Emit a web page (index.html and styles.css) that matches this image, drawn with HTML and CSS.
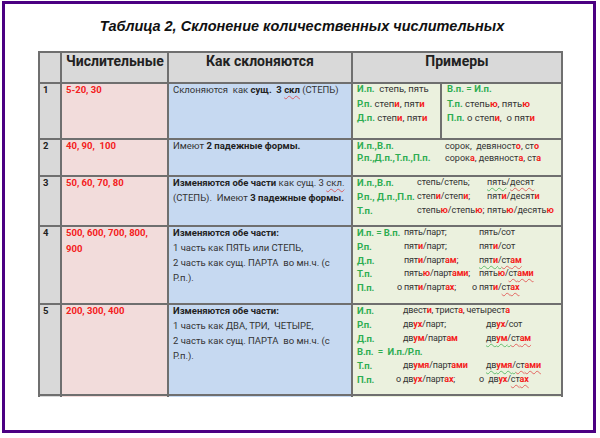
FILE: index.html
```html
<!DOCTYPE html>
<html lang="ru">
<head>
<meta charset="utf-8">
<title>Склонение количественных числительных</title>
<link rel="stylesheet" href="styles.css">
</head>
<body>
<div class="frame">
  <h1 class="title">Таблица 2, Склонение количественных числительных</h1>
  <div class="clip">
    <div class="tbl">
      <div class="c hd"></div>
      <div class="c hd">Числительные</div>
      <div class="c hd center">Как склоняются</div>
      <div class="c hd center wide">Примеры</div>

      <div class="c num"><div class="in">1</div></div>
      <div class="c red"><div class="in">5-20, 30</div></div>
      <div class="c blue"><div class="in">Склоняются&nbsp; как <b>сущ.&nbsp; 3 <span class="sp-r">скл</span></b> (СТЕПЬ)</div></div>
      <div class="c green r1">
        <div class="in">
          <div><span class="g">И.п.</span>&nbsp; степь, пять</div>
          <div><span class="g">Р.п.</span> степ<span class="r">и</span>, пят<span class="r">и</span></div>
          <div><span class="g">Д.п.</span> степ<span class="r">и</span>, пят<span class="r">и</span></div>
        </div>
      </div>
      <div class="c green r1 r1b">
        <div class="in">
          <div><span class="g">В.п. = И.п.</span></div>
          <div><span class="g">Т.п.</span> степь<span class="r">ю</span>, пять<span class="r">ю</span></div>
          <div><span class="g">П.п.</span> о степ<span class="r">и</span>,&nbsp; о пят<span class="r">и</span></div>
        </div>
      </div>

      <div class="c num"><div class="in">2</div></div>
      <div class="c red"><div class="in">40, 90,&nbsp; 100</div></div>
      <div class="c blue"><div class="in">Имеют <b>2 падежные формы.</b></div></div>
      <div class="c green wide">
        <div class="in ex ex2">
          <span class="g">И.п.,В.п.</span><span>сорок,&nbsp; девяност<span class="r">о</span>, ст<span class="r">о</span></span>
          <span class="g">Р.п.,Д.п.,Т.п.,П.п.</span><span>сорок<span class="r">а</span>, девяност<span class="r">а</span>, ст<span class="r">а</span></span>
        </div>
      </div>

      <div class="c num"><div class="in">3</div></div>
      <div class="c red"><div class="in">50, 60, 70, 80</div></div>
      <div class="c blue"><div class="in"><b>Изменяются обе части</b> как сущ. 3 <span class="sp-r">скл.</span><br>(СТЕПЬ).&nbsp; Имеют <b>3 падежные формы.</b></div></div>
      <div class="c green wide">
        <div class="in ex ex3">
          <span class="g">И.п.,В.п.</span><span>степь/степь;</span><span><span class="sp-g">пять</span>/<span class="sp-r">десят</span></span>
          <span class="g">Р.п., Д.п.,П.п.</span><span>степ<span class="r">и</span>/степ<span class="r">и</span>;</span><span>пят<span class="r">и</span>/десят<span class="r">и</span></span>
          <span class="g">Т.п.</span><span>степь<span class="r">ю</span>/степь<span class="r">ю</span>;</span><span>пять<span class="r">ю</span>/десять<span class="r">ю</span></span>
        </div>
      </div>

      <div class="c num"><div class="in">4</div></div>
      <div class="c red"><div class="in">500, 600, 700, 800,<br>900</div></div>
      <div class="c blue"><div class="in"><b>Изменяются обе части:</b><br>1 часть как ПЯТЬ или СТЕПЬ,<br>2 часть как сущ. ПАРТА&nbsp; во мн.ч. (с<br>Р.п.).</div></div>
      <div class="c green wide">
        <div class="in ex ex4">
          <span class="g">И.п. = В.п.</span><span>пять/парт;</span><span>пять/сот</span>
          <span class="g">Р.п.</span><span>пят<span class="r">и</span>/парт;</span><span>пят<span class="r">и</span>/сот</span>
          <span class="g">Д.п.</span><span>пят<span class="r">и</span>/парт<span class="r">ам</span>;</span><span><span class="sp-g">пят<span class="r">и</span>/</span><span class="sp-r">ст<span class="r">ам</span></span></span>
          <span class="g">Т.п.</span><span>пять<span class="r">ю</span>/парт<span class="r">ами</span>;</span><span>пять<span class="r">ю</span>/<span class="sp-r">ст<span class="r">ами</span></span></span>
          <span class="g">П.п.</span><span class="o">о пят<span class="r">и</span>/парт<span class="r">ах</span>;</span><span class="o">о пят<span class="r">и</span>/<span class="sp-r">ст<span class="r">ах</span></span></span>
        </div>
      </div>

      <div class="c num"><div class="in">5</div></div>
      <div class="c red"><div class="in">200, 300, 400</div></div>
      <div class="c blue"><div class="in"><b>Изменяются обе части:</b><br>1 часть как ДВА, ТРИ,&nbsp; ЧЕТЫРЕ,<br>2 часть как сущ. ПАРТА&nbsp; во мн.ч. (с<br>Р.п.).</div></div>
      <div class="c green wide">
        <div class="in ex ex5">
          <span class="g">И.п.</span><span class="span2">двест<span class="r">и</span>, трист<span class="r">а</span>, четырест<span class="r">а</span></span>
          <span class="g">Р.п.</span><span>дв<span class="r">ух</span>/парт;</span><span>дв<span class="r">ух</span>/сот</span>
          <span class="g">Д.п.</span><span>дв<span class="r">ум</span>/парт<span class="r">ам</span></span><span><span class="sp-g">дв<span class="r">ум</span>/</span><span class="sp-r">ст<span class="r">ам</span></span></span>
          <span class="g all">В.п.&nbsp; =&nbsp; И.п./Р.п.</span>
          <span class="g">Т.п.</span><span>дв<span class="r">умя</span>/парт<span class="r">ами</span></span><span><span class="sp-g">дв<span class="r">умя</span>/</span><span class="sp-r">ст<span class="r">ами</span></span></span>
          <span class="g">П.п.</span><span class="o">о дв<span class="r">ух</span>/парт<span class="r">ах</span>;</span><span class="o">о&nbsp; дв<span class="r">ух</span>/<span class="sp-r">ст<span class="r">ах</span></span></span>
        </div>
      </div>

      <div class="c num"></div>
      <div class="c red"></div>
      <div class="c blue"></div>
      <div class="c green wide"></div>
    </div>
  </div>
</div>
</body>
</html>
```

FILE: styles.css
```css
* { box-sizing: border-box; }

html, body {
  margin: 0;
  padding: 0;
  background: #ffffff;
}

body {
  width: 600px;
  height: 438px;
  overflow: hidden;
  font-family: Roboto, "Noto Sans", sans-serif;
}

.frame {
  width: 594px;
  height: 432px;
  margin: 1px 0 0 2px;
  border: 3px solid #4b0082;
}

.title {
  margin: 0;
  padding: 14px 0 0 6px;
  font-family: "Liberation Sans", Arial, sans-serif;
  font-size: 14.5px;
  line-height: 16px;
  font-weight: bold;
  font-style: italic;
  text-align: center;
  color: #111;
}

.clip {
  margin: 17px 0 0 33px;
  height: 346px;
  overflow: hidden;
}

.tbl {
  display: grid;
  grid-template-columns: 20px 105px 182px 87px 119px;
  grid-template-rows: 29px 54px 35px 48px 76px 89px 30px;
  gap: 2px;
  padding: 2px;
  width: max-content;
  background: #6f6f6f;
}

.c {
  font-size: 9.5px;
  color: #333;
  overflow: hidden;
}

.wide { grid-column: span 2; }

.hd {
  background: #d9d9d9;
  font-size: 14px;
  font-weight: bold;
  line-height: 17px;
  color: #222;
  padding: 0 0 0 4px;
}
.hd.center { text-align: center; padding: 0; }

.num {
  background: #d9d9d9;
  font-weight: bold;
  padding-left: 3px;
  line-height: 14px;
  color: #222;
}

.red {
  background: #f2dcdb;
  color: #f42020;
  font-weight: bold;
  padding-left: 4px;
  line-height: 16px;
}
.red .in { margin-top: -2px; }

.blue {
  background: #c6d9f1;
  padding-left: 4px;
  line-height: 15px;
}
.blue .in { margin-top: -2px; }
.blue b { color: #222; }

.green {
  background: #ebf1de;
  padding-left: 4px;
  line-height: 13.8px;
}
.green.wide { font-size: 9px; }
.green .g { font-size: 9.5px; }

.in { margin-top: -1px; }

.r1 { line-height: 14.5px; }
.r1 .in { margin-top: -2px; }
.r1b { padding-left: 5px; }

.g {
  color: #2ead52;
  font-weight: bold;
}
.r {
  color: #f41c1c;
  font-weight: bold;
}

.ex {
  display: grid;
  white-space: nowrap;
}
.ex4, .ex5 { letter-spacing: -0.15px; }
.ex2 { grid-template-columns: 88px auto; line-height: 12px; margin-top: 0; }
.ex3 { grid-template-columns: 60px 70px auto; }
.ex4 { grid-template-columns: 47px 75px auto; }
.ex5 { grid-template-columns: 46px 83px auto; }

.span2 { grid-column: span 2; }
.all { grid-column: 1 / -1; }
.o { margin-left: -7px; }

.sp-r {
  text-decoration: underline wavy rgba(225, 50, 50, 0.7);
  text-decoration-thickness: 0.6px;
  text-underline-offset: 1.5px;
}
.sp-g {
  text-decoration: underline wavy rgba(50, 170, 70, 0.7);
  text-decoration-thickness: 0.6px;
  text-underline-offset: 1.5px;
}
```
